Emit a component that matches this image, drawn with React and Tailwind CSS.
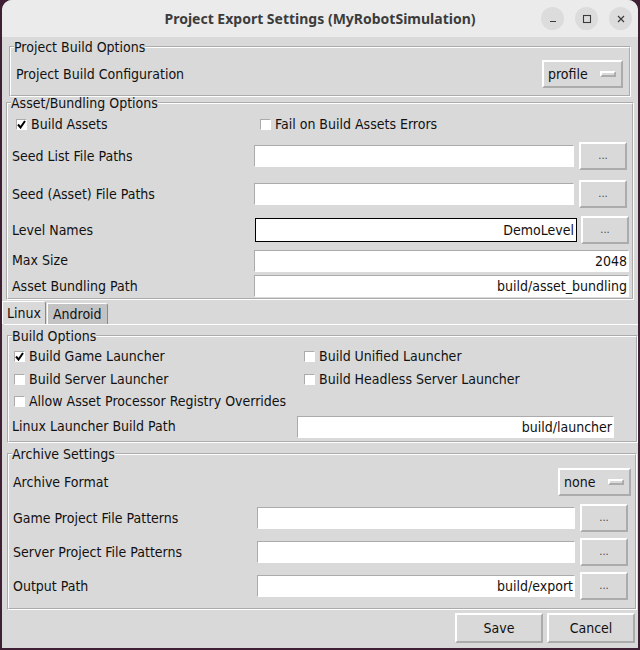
import React from 'react'

const Entry = ({ value = '', className = '' }) => (
    <div className={`h-[22px] bg-white [border:1px_inset_#fff] flex items-center justify-end pr-[1px] leading-none shrink-0 ${className}`}>
        {value}
    </div>
)

const Dots = ({ className = '' }) => (
    <div className={`w-[48px] h-[28px] shrink-0 [border:2px_outset_#fff] flex items-center justify-center text-[11px] text-[#444] ${className}`}>
        ...
    </div>
)

const Check = ({ checked }) => (
    <span className="w-[11px] h-[11px] bg-white [border:1px_inset_#fff] flex items-center justify-center shrink-0">
        {checked && (
            <svg width="9" height="9" viewBox="0 0 9 9">
                <path d="M1 4.5 L3.5 7.5 L8 1" fill="none" stroke="#000" strokeWidth="2" />
            </svg>
        )}
    </span>
)

const CheckItem = ({ label, checked, className = '' }) => (
    <div className={`flex items-center gap-[4px] ${className}`}>
        <Check checked={checked} />
        <span>{label}</span>
    </div>
)

const OptionButton = ({ label, className = '' }) => (
    <div className={`h-[28px] shrink-0 [border:2px_outset_#fff] flex items-center justify-between pl-[4px] pr-[5px] ${className}`}>
        <span>{label}</span>
        <span className="w-[16px] h-[6px] [border:2px_outset_#fff]"></span>
    </div>
)

const Frame = ({ title, className = '', children }) => (
    <fieldset className={`[border:2px_groove_#fff] pl-[3px] ${className}`}>
        <legend className="leading-[16px] px-0">{title}</legend>
        {children}
    </fieldset>
)

export default function App() {
    return (
        <div className="w-[640px] h-[650px] bg-[#3e1f33] overflow-hidden">
            <div className="ml-[2px] w-[636px] h-[648px] rounded-t-[10px] overflow-hidden bg-[#d9d9d9] text-[14px] text-[#111] font-['DejaVu_Sans_Condensed','DejaVu_Sans',sans-serif] flex flex-col">
                {/* Title bar */}
                <div className="h-[37px] bg-[#ebebeb] flex items-center relative shrink-0">
                    <div className="w-full text-center font-bold text-[14px] text-[#3c3c3c] font-['Noto_Sans',sans-serif]">
                        Project Export Settings (MyRobotSimulation)
                    </div>
                    <div className="absolute right-[6px] top-[7px] flex gap-[11px]">
                        <span className="w-[23px] h-[23px] rounded-full bg-[#dcdcdc] flex items-center justify-center">
                            <svg width="10" height="10" viewBox="0 0 10 10"><path d="M2 7.5 H8" stroke="#3c3c3c" strokeWidth="1.2" /></svg>
                        </span>
                        <span className="w-[23px] h-[23px] rounded-full bg-[#dcdcdc] flex items-center justify-center">
                            <svg width="10" height="10" viewBox="0 0 10 10"><rect x="1.5" y="1.5" width="7" height="7" fill="none" stroke="#3c3c3c" strokeWidth="1.1" /></svg>
                        </span>
                        <span className="w-[23px] h-[23px] rounded-full bg-[#dcdcdc] flex items-center justify-center">
                            <svg width="10" height="10" viewBox="0 0 10 10"><path d="M2 2 L8 8 M8 2 L2 8" stroke="#3c3c3c" strokeWidth="1.2" /></svg>
                        </span>
                    </div>
                </div>

                {/* Project Build Options */}
                <Frame title="Project Build Options" className="mx-[7px] mt-[2px] pb-[7px] pr-[6px]">
                    <div className="flex items-center justify-between h-[28px] mt-[5px] pl-[2px]">
                        <span>Project Build Configuration</span>
                        <OptionButton label="profile" className="w-[81px]" />
                    </div>
                </Frame>

                {/* Asset/Bundling Options */}
                <Frame title="Asset/Bundling Options" className="mx-[4px] -mt-[2px] pb-[1px]">
                    <div className="flex items-center h-[20px] mt-[3px]">
                        <CheckItem label="Build Assets" checked className="ml-[5px] w-[244px]" />
                        <CheckItem label="Fail on Build Assets Errors" />
                    </div>
                    <div className="flex items-center h-[28px] mt-[8px]">
                        <span className="w-[243px] pl-[1px]">Seed List File Paths</span>
                        <Entry className="w-[320px]" />
                        <Dots className="ml-[5px]" />
                    </div>
                    <div className="flex items-center h-[28px] mt-[10px]">
                        <span className="w-[243px] pl-[1px]">Seed (Asset) File Paths</span>
                        <Entry className="w-[320px]" />
                        <Dots className="ml-[5px]" />
                    </div>
                    <div className="flex items-center h-[28px] mt-[8px]">
                        <span className="w-[244px] pl-[1px]">Level Names</span>
                        <div className="w-[322px] h-[24px] bg-white border border-black flex items-center justify-end pr-[2px]">DemoLevel</div>
                        <Dots className="ml-[4px]" />
                    </div>
                    <div className="flex items-center h-[21px] mt-[6px]">
                        <span className="w-[243px] pl-[1px]">Max Size</span>
                        <Entry value="2048" className="w-[375px] h-[21px]" />
                    </div>
                    <div className="flex items-center h-[22px] mt-[4px]">
                        <span className="w-[243px] pl-[1px]">Asset Bundling Path</span>
                        <Entry value="build/asset_bundling" className="w-[375px]" />
                    </div>
                </Frame>

                {/* Tabs */}
                <div className="flex items-end h-[23px] mt-[1px]">
                    <div className="h-[23px] px-[4px] flex items-center border-t border-l border-white border-r border-r-[#8a8a8a] rounded-tr-[3px] bg-[#d9d9d9]">Linux</div>
                    <div className="h-[21px] px-[5px] ml-[1px] flex items-center border-t border-l border-white border-r border-r-[#8a8a8a] rounded-tr-[3px] bg-[#c3c3c3]">Android</div>
                </div>
                <div className="flex-1 border-t border-white ml-[2px] flex flex-col">
                    {/* Build Options */}
                    <Frame title="Build Options" className="ml-[3px] mr-0 mt-[3px] pb-[4px]">
                        <div className="flex items-center h-[20px] mt-[2px]">
                            <CheckItem label="Build Game Launcher" checked className="ml-[2px] w-[290px]" />
                            <CheckItem label="Build Unified Launcher" />
                        </div>
                        <div className="flex items-center h-[20px] mt-[3px]">
                            <CheckItem label="Build Server Launcher" className="ml-[2px] w-[290px]" />
                            <CheckItem label="Build Headless Server Launcher" />
                        </div>
                        <div className="flex items-center h-[20px] mt-[2px]">
                            <CheckItem label="Allow Asset Processor Registry Overrides" className="ml-[2px]" />
                        </div>
                        <div className="flex items-center h-[21px] mt-[5px]">
                            <span className="w-[285px]">Linux Launcher Build Path</span>
                            <Entry value="build/launcher" className="w-[317px] h-[21px]" />
                        </div>
                    </Frame>

                    {/* Archive Settings */}
                    <Frame title="Archive Settings" className="ml-[3px] mr-[1px] mt-[3px] pb-[8px]">
                        <div className="flex items-center justify-between h-[28px] mt-[6px] pl-[1px] pr-[4px]">
                            <span>Archive Format</span>
                            <OptionButton label="none" className="w-[73px]" />
                        </div>
                        <div className="flex items-center h-[28px] mt-[8px]">
                            <span className="w-[245px] pl-[1px]">Game Project File Patterns</span>
                            <Entry className="w-[318px]" />
                            <Dots className="ml-[5px]" />
                        </div>
                        <div className="flex items-center h-[28px] mt-[6px]">
                            <span className="w-[245px] pl-[1px]">Server Project File Patterns</span>
                            <Entry className="w-[318px]" />
                            <Dots className="ml-[5px]" />
                        </div>
                        <div className="flex items-center h-[28px] mt-[6px]">
                            <span className="w-[245px] pl-[1px]">Output Path</span>
                            <Entry value="build/export" className="w-[318px]" />
                            <Dots className="ml-[5px]" />
                        </div>
                    </Frame>

                    {/* Bottom buttons */}
                    <div className="flex justify-end gap-[4px] mt-[3px] mr-[3px]">
                        <div className="w-[88px] h-[30px] [border:2px_outset_#fff] flex items-center justify-center text-[14px]">Save</div>
                        <div className="w-[88px] h-[30px] [border:2px_outset_#fff] flex items-center justify-center text-[14px]">Cancel</div>
                    </div>
                </div>
            </div>
        </div>
    )
}
